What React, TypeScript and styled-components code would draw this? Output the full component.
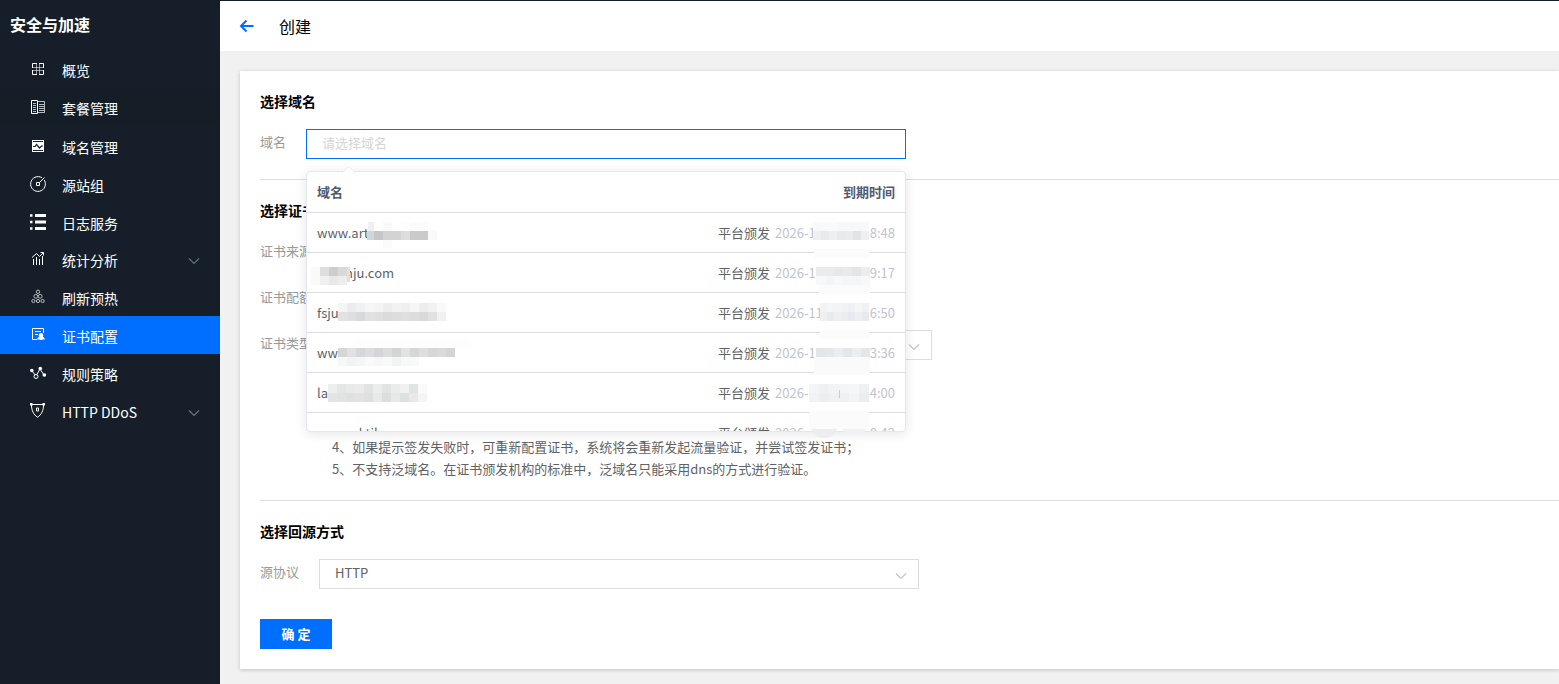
import React from 'react';
import styled, { createGlobalStyle, css } from 'styled-components';

const GlobalStyle = createGlobalStyle`
  *, *::before, *::after { box-sizing: border-box; }
  body {
    margin: 0;
    background: #f1f1f1;
    color: #606266;
    font-family: "Noto Sans CJK SC", "Liberation Sans", sans-serif;
    font-size: 13px;
    line-height: 22px;
  }
`;

const Page = styled.div`
  display: flex;
  min-height: 100vh;
`;

const Sidebar = styled.aside`
  flex: 0 0 220px;
  background: #161f29;
  color: #fff;
`;

const Brand = styled.h1`
  margin: 0;
  padding: 0 10px;
  height: 50px;
  font-size: 16px;
  font-weight: 700;
  line-height: 48px;
`;

const Nav = styled.nav`
  display: flex;
  flex-direction: column;
`;

const NavLink = styled.a<{ $state?: 'active' | 'hover'; $low?: boolean }>`
  display: flex;
  align-items: center;
  height: 38px;
  padding: ${p => (p.$low ? '2px 20px 0 30px' : '0 20px 0 30px')};
  color: #fff;
  font-size: 14px;
  font-weight: 400;
  text-decoration: none;
  ${p => p.$state === 'active' && css`background: #006eff;`}
  ${p => p.$state === 'hover' && css`background: #151e27;`}
`;

const NavIcon = styled.svg`
  width: 16px;
  height: 16px;
  flex: none;
  fill: none;
  stroke: currentColor;
`;

const NavText = styled.span`
  flex: 1;
  padding: 2px 0 0 16px;
`;

const NavArrow = styled.span`
  display: flex;
  padding-top: 4px;
`;

const Main = styled.main`
  flex: 1;
  min-width: 0;
  padding-bottom: 15px;
`;

const TopBar = styled.header`
  display: flex;
  align-items: center;
  height: 51px;
  padding: 0 18px;
  border-top: 1px solid #161f29;
  background: #fff;
  color: #000;
`;

const BackButton = styled.button`
  display: flex;
  padding: 0;
  border: 0;
  background: none;
  color: #006eff;
  cursor: pointer;
`;

const PageTitle = styled.h2`
  margin: 0 0 0 25px;
  font-size: 16px;
  font-weight: 400;
`;

const Card = styled.form`
  margin: 20px 0 0 20px;
  padding: 0 0 20px 20px;
  background: #fff;
  box-shadow: 0 1px 4px rgba(0, 0, 0, 0.2);
`;

const Section = styled.section<{ $last?: boolean }>`
  display: flex;
  flex-direction: column;
  gap: 16px;
  padding: 20px 0;
  ${p => p.$last ? css`padding-bottom: 30px;` : css`border-bottom: 1px solid #ddd;`}
`;

const SectionTitle = styled.h3`
  margin: 0;
  height: 22px;
  color: #000;
  font-size: 14px;
  font-weight: 700;
  line-height: 20px;
`;

const Field = styled.div`
  display: flex;
  gap: 20px;
  height: 30px;
`;

const Label = styled.label`
  flex: none;
  color: #999;
  line-height: 26px;
`;

const Control = styled.div`
  position: relative;
  width: 600px;
`;

const control = css`
  display: block;
  width: 100%;
  height: 30px;
  padding: 0 15px 3px;
  border: 1px solid #ddd;
  border-radius: 0;
  outline: 0;
  background: #fff;
  color: #606266;
  font-family: inherit;
  font-size: 13px;
`;

const TextInput = styled.input`
  ${control}
  border-color: #006eff;
  &::placeholder { color: #d5d5d5; opacity: 1; }
`;

const SelectBox = styled.select`
  ${control}
  appearance: none;
`;

const SelectArrow = styled.span`
  position: absolute;
  right: 12px;
  bottom: 7px;
  display: flex;
  pointer-events: none;
`;

const Popup = styled.div`
  position: absolute;
  z-index: 2;
  top: 42px;
  left: 0;
  width: 100%;
  border: 1px solid #e4e7ed;
  border-radius: 4px;
  background: #fff;
  box-shadow: 0 2px 12px rgba(0, 0, 0, 0.1);
`;

const PopupArrow = styled.svg`
  position: absolute;
  top: -6px;
  left: 35px;
`;

const PopupSmudge = styled.svg`
  position: absolute;
  right: 36px;
  bottom: -8px;
`;

const PopupScroll = styled.div`
  height: 259px;
  overflow: hidden;
`;

const DomainTable = styled.table`
  width: 100%;
  border-collapse: separate;
  border-spacing: 0;
`;

const HeadCell = styled.th<{ $end?: boolean }>`
  height: 41px;
  padding: 0 10px;
  border-bottom: 1px solid #ddd;
  color: #515a6e;
  font-weight: 700;
  text-align: ${p => (p.$end ? 'right' : 'left')};
`;

const Cell = styled.td<{ $end?: boolean }>`
  height: 40px;
  padding: 0 10px;
  border-bottom: 1px solid #ddd;
  text-align: ${p => (p.$end ? 'right' : 'left')};
`;

const Masked = styled.span<{ $shift?: boolean }>`
  position: relative;
  display: inline-block;
  ${p => p.$shift && css`padding-left: 28px;`}
`;

const Expiry = styled.span`
  position: relative;
  display: inline-flex;
  justify-content: space-between;
  width: 120px;
  margin-left: 5px;
  color: #c0c4cc;
`;

const MosaicSvg = styled.svg`
  position: absolute;
  top: 0;
  left: 0;
  width: 100%;
  height: 22px;
  overflow: visible;
`;

const Hints = styled.ol`
  margin: 0;
  padding: 60px 0 0 72px;
  list-style: none;
`;

const Submit = styled.button`
  display: block;
  width: 72px;
  height: 30px;
  padding: 0 0 2px;
  border: 0;
  background: #006eff;
  color: #fff;
  font-family: inherit;
  font-size: 13px;
  font-weight: 700;
  cursor: pointer;
`;

type Strip = { x: number; y: number; h: number; w?: number; tones: string[] };

function Mosaic({ strips }: { strips: Strip[] }) {
  return (
    <MosaicSvg aria-hidden="true" shapeRendering="crispEdges">
      {strips.map((s, i) =>
        s.tones.map((tone, j) => (
          <rect key={`${i}-${j}`} x={s.x + j * (s.w ?? 9)} y={s.y} width={s.w ?? 9} height={s.h} fill={tone} />
        )),
      )}
    </MosaicSvg>
  );
}

const Chevron = ({ color = '#c0c4cc' }: { color?: string }) => (
  <svg width="12" height="12" viewBox="0 0 12 12" fill="none" stroke={color} strokeWidth="1.2" aria-hidden="true">
    <path d="M1 3.500 6 8.500l5-5" />
  </svg>
);

const icons: Record<string, React.ReactNode> = {
  grid: (
    <>
      <path d="M6.500 3v10M9.500 3v10M3 6.500h10M3 9.500h10" opacity=".55" />
      <path d="M7 2.500H2.500V7M9 2.500h4.500V7M2.500 9v4.500H7M13.500 9v4.500H9" />
    </>
  ),
  book: (
    <>
      <path d="M1.500 1.500h6v13h-6z" />
      <path d="M3 4.500h3M3 6.500h3M3 8.500h3M3 10.500h3M3 12.500h3" opacity=".7" />
      <path d="M8 2.500h6.500v11H8M9 5.500h5M9 7.500h5M9 9.500h5M9 11.500h5" opacity=".7" />
    </>
  ),
  wave: (
    <>
      <path d="M2 2h12v12H2z" fill="currentColor" stroke="none" />
      <path d="M3 3.500h10M3 12.500h10" stroke="#161f29" />
      <path d="M3 8.500h2l1.500-2 3 3.500 2-2H13" stroke="#161f29" strokeWidth="1.2" />
    </>
  ),
  gauge: (
    <>
      <path d="M14.200 4A7.400 7.400 0 1 1 12 1.800M14.500 1.500l-5 5" />
      <path d="M6.500 6.500h3v3h-3z" />
    </>
  ),
  list: (
    <>
      <path d="M5 1.500h11M5 8h11M5 14.500h11" strokeWidth="3" />
      <path d="M0 1.500h2.500M0 8h2.500M0 14.500h2.500" strokeWidth="2.500" />
    </>
  ),
  chart: (
    <path d="M3.500 8v6M6.500 6v8M9.500 8v6M12.500 5v9M2 6.500l4.500-4 3 3 4-4M10.500 1.500h3v3" />
  ),
  cluster: (
    <g opacity=".7">
      <circle cx="8" cy="2.800" r="1.700" />
      <circle cx="5.800" cy="7.300" r="1.900" />
      <circle cx="10.200" cy="7.300" r="1.900" />
      <circle cx="3.400" cy="12" r="1.600" />
      <circle cx="8" cy="12" r="1.600" />
      <circle cx="12.600" cy="12" r="1.600" />
    </g>
  ),
  cert: (
    <>
      <path d="M7 12.500H2.500v-11h11V6M5 4.500h6M5 7.500h3" />
      <path d="M11 6a2.300 2.300 0 0 1 1.800 3.700L14.500 11v2l-1.500-.8-1 .8h-2l-1-.8-1.500.8v-2l1.700-1.300A2.300 2.300 0 0 1 11 6z" fill="currentColor" stroke="none" />
    </>
  ),
  nodes: (
    <>
      <path d="M2 6l4 5 4-7 4 6" />
      <circle cx="6" cy="11.500" r="2" fill="#161f29" />
      <g fill="currentColor" stroke="none">
        <circle cx="1.800" cy="5.500" r="1.800" />
        <circle cx="10.300" cy="3.500" r="1.800" />
        <circle cx="14.300" cy="10" r="1.800" />
      </g>
    </>
  ),
  shield: (
    <>
      <path d="M2 1.500h11M1.500 2c0 5.500 2 9.500 6 12.300 4-2.800 6-6.800 6-12.300" />
      <path d="M6.500 5h2v3h-2z" />
      <path d="M0 0h2.500v2.500H0zM12.500 0H15v2.500h-2.500z" fill="currentColor" stroke="none" />
    </>
  ),
};

const navItems: { label: string; icon: string; state?: 'active' | 'hover'; low?: boolean; arrow?: string }[] = [
  { label: '概览', icon: 'grid' },
  { label: '套餐管理', icon: 'book', state: 'hover' },
  { label: '域名管理', icon: 'wave', low: true },
  { label: '源站组', icon: 'gauge', low: true },
  { label: '日志服务', icon: 'list', low: true },
  { label: '统计分析', icon: 'chart', arrow: '#60707c' },
  { label: '刷新预热', icon: 'cluster' },
  { label: '证书配置', icon: 'cert', state: 'active' },
  { label: '规则策略', icon: 'nodes' },
  { label: 'HTTP DDoS', icon: 'shield', arrow: '#6f7479' },
];

type Row = { domain: string; shift?: boolean; mask: Strip[]; start: string; end: string; dateMask: Strip[] };

const rows: Row[] = [
  {
    domain: 'www.art', start: '2026-1', end: '8:48',
    mask: [
      { x: 51, y: 0, h: 9, w: 6, tones: ['#f0f0f1'] },
      { x: 50, y: 9, h: 9, w: 7, tones: ['#d5d5d7'] },
      { x: 57, y: 0, h: 9, tones: ['#fff', '#f9f9f9', '#fff', '#fdfdfd', '#fbfbfb', '#fbfbfb', '#fff'] },
      { x: 57, y: 9, h: 9, tones: ['#c5c6c9', '#d3d3d4', '#d3d3d4', '#dcdddc', '#c9cacc', '#c9cacc', '#f9f9f9'] },
      { x: 66, y: 18, h: 8, tones: ['#fbfbfb'] },
    ],
    dateMask: [
      { x: 38, y: 0, h: 9, w: 8, tones: ['#f8f9fa', '#fafafb', '#f9fafb', '#f8f8f9', '#f7f8f9', '#f8f8f8', '#f7f8f8'] },
      { x: 38, y: 9, h: 9, w: 8, tones: ['#efeff2', '#e9eaed', '#eeeff2', '#e8e9ec', '#eaebed', '#e2e4e7', '#eeeff1'] },
      { x: 39, y: 27, h: 9, w: 56, tones: ['#fbfbfb'] },
    ],
  },
  {
    domain: 'nju.com', shift: true, start: '2026-1', end: '9:17',
    mask: [
      { x: -6, y: 5, h: 9, tones: ['#fafafa', '#dedede', '#cccdce', '#d9d9da'] },
      { x: -6, y: 14, h: 9, tones: ['#fafafa', '#f0f0f0', '#e9e9e9', '#ededed'] },
      { x: 30, y: 5, h: 15, w: 3, tones: ['#e0e0e0'] },
    ],
    dateMask: [
      { x: 41, y: 5, h: 9, w: 9, tones: ['#e9ebee', '#eaebef', '#e6e8ec', '#e9eaed', '#e3e5e8', '#ededf1'] },
      { x: 41, y: 14, h: 9, w: 9, tones: ['#f7f8f9', '#f4f5f7', '#f7f8f9', '#f5f6f7', '#f4f6f7', '#f7f8f9'] },
      { x: 44, y: 23, h: 9, w: 51, tones: ['#fbfbfb'] },
    ],
  },
  {
    domain: 'fsju', start: '2026-11', end: '6:50',
    mask: [
      { x: 21, y: 1, h: 9, tones: ['#f5f5f6', '#ebeced', '#f0f1f1', '#f6f6f6', '#f3f3f3', '#ededee', '#f2f2f2', '#eeefef', '#f6f6f6', '#ededee', '#f2f2f2', '#f9f9f9'] },
      { x: 21, y: 10, h: 9, tones: ['#e1e2e3', '#dedfe0', '#d8d9da', '#e0e1e2', '#dedfe0', '#dadbdc', '#dcdddd', '#dfdfdf', '#dcdcdc', '#d9d9d9', '#e1e1e1', '#f1f1f1'] },
    ],
    dateMask: [
      { x: 45, y: 1, h: 9, w: 7, tones: ['#f0f2f3', '#f5f6f7', '#f3f4f6', '#f1f2f5', '#eff0f3', '#f5f5f7', '#f0f1f3'] },
      { x: 45, y: 10, h: 9, w: 7, tones: ['#edeff1', '#e9eaed', '#eeeff2', '#ebecef', '#e8e9ee', '#edeef1', '#e9eaed'] },
      { x: 45, y: 28, h: 9, w: 49, tones: ['#fbfbfb'] },
    ],
  },
  {
    domain: 'ww', start: '2026-10', end: '3:36',
    mask: [
      { x: 36, y: -3, h: 9, w: 118, tones: ['#fdfdfd'] },
      { x: 21, y: 6, h: 9, tones: ['#d5d6d8', '#e0e1e2', '#d6d7d8', '#dcddde', '#d5d5d7', '#dbdcdc', '#d4d4d6', '#e2e2e2', '#d5d6d7', '#dddede', '#d7d7d9', '#dadada', '#d3d4d6'] },
      { x: 21, y: 15, h: 9, tones: ['#f7f9f9', '#f1f3f3', '#f4f5f5', '#f9f9f9', '#f6f6f6', '#f9f9f9', '#f1f4f3', '#f7f8f8', '#f8f9f9'] },
    ],
    dateMask: [
      { x: 41, y: 6, h: 9, w: 9, tones: ['#e3e5e9', '#e5e7ed', '#ecedf1', '#e4e6ec', '#ecedf0', '#e5e6ea'] },
      { x: 39, y: 15, h: 18, w: 56, tones: ['#fafafa'] },
    ],
  },
  {
    domain: 'la', start: '2026-', end: '4:00',
    mask: [
      { x: 11, y: 2, h: 9, tones: ['#eeeeee', '#e4e6e5', '#e8e9e8', '#ebebec', '#e1e3e2', '#ebecec', '#e2e4e3', '#eaebea', '#f1f1f1', '#e2e4e3', '#fafafa'] },
      { x: 11, y: 11, h: 9, tones: ['#e3e5e4', '#e1e2e2', '#dfe0df', '#e1e2e2', '#dee0df', '#e8e9e9', '#dcdddd', '#e7e9e8', '#dee0df', '#e8e8e8', '#f5f5f5'] },
    ],
    dateMask: [
      { x: 34, y: 2, h: 9, w: 10, tones: ['#f3f4f5', '#eff0f2', '#f2f3f4', '#f4f5f7', '#f5f6f7', '#eef0f2'] },
      { x: 34, y: 11, h: 9, w: 10, tones: ['#f1f2f4', '#edeef0', '#f0f1f3', '#eff0f3', '#f3f4f5', '#ecedf0'] },
      { x: 64, y: 8, h: 8, w: 1, tones: ['#c9ccd3'] },
      { x: 34, y: 29, h: 18, w: 60, tones: ['#fbfbfb'] },
    ],
  },
  { domain: 'www.aktiles.com', start: '2026-', end: '8:42', mask: [], dateMask: [] },
];

export default function App() {
  return (
    <>
      <GlobalStyle />
      <Page>
        <Sidebar>
          <Brand>安全与加速</Brand>
          <Nav>
            {navItems.map(item => (
              <NavLink key={item.label} href="#" $state={item.state} $low={item.low}>
                <NavIcon viewBox="0 0 16 16" aria-hidden="true">{icons[item.icon]}</NavIcon>
                <NavText>{item.label}</NavText>
                {item.arrow && <NavArrow><Chevron color={item.arrow} /></NavArrow>}
              </NavLink>
            ))}
          </Nav>
        </Sidebar>
        <Main>
          <TopBar>
            <BackButton type="button" aria-label="返回">
              <svg width="16" height="16" viewBox="0 0 16 16" fill="none" stroke="currentColor" strokeWidth="2">
                <path d="M15.500 8H3M8.500 2.500 3 8l5.500 5.500" />
              </svg>
            </BackButton>
            <PageTitle>创建</PageTitle>
          </TopBar>
          <Card>
            <Section>
              <SectionTitle>选择域名</SectionTitle>
              <Field>
                <Label htmlFor="domain">域名</Label>
                <Control>
                  <TextInput id="domain" placeholder="请选择域名" />
                  <Popup>
                    <PopupArrow width="14" height="7" viewBox="0 0 14 7" aria-hidden="true">
                      <path d="M0 7 6 1h1l6 6" fill="#fff" stroke="#ebeef5" />
                    </PopupArrow>
                    <PopupScroll>
                      <DomainTable>
                        <thead>
                          <tr>
                            <HeadCell scope="col">域名</HeadCell>
                            <HeadCell scope="col" $end>到期时间</HeadCell>
                          </tr>
                        </thead>
                        <tbody>
                          {rows.map(row => (
                            <tr key={row.domain}>
                              <Cell>
                                <Masked $shift={row.shift}>
                                  {row.domain}
                                  <Mosaic strips={row.mask} />
                                </Masked>
                              </Cell>
                              <Cell $end>
                                平台颁发
                                <Expiry>
                                  <span>{row.start}</span>
                                  <span>{row.end}</span>
                                  <Mosaic strips={row.dateMask} />
                                </Expiry>
                              </Cell>
                            </tr>
                          ))}
                        </tbody>
                      </DomainTable>
                    </PopupScroll>
                    <PopupSmudge width="60" height="10" viewBox="0 0 60 10" aria-hidden="true">
                      <path d="M2 0h26c-2 5-6 9-13 9S4 5 2 0z" fill="#ededf0" />
                      <path d="M33 0h24c-3 4-6 6-12 6s-9-2-12-6z" fill="#f0f1f3" />
                    </PopupSmudge>
                  </Popup>
                </Control>
              </Field>
            </Section>
            <Section>
              <SectionTitle>选择证书</SectionTitle>
              <Field><Label as="span">证书来源</Label></Field>
              <Field><Label as="span">证书配额</Label></Field>
              <Field>
                <Label htmlFor="cert-type">证书类型</Label>
                <Control>
                  <SelectBox id="cert-type" />
                  <SelectArrow><Chevron /></SelectArrow>
                </Control>
              </Field>
              <Hints start={4}>
                <li>4、如果提示签发失败时，可重新配置证书，系统将会重新发起流量验证，并尝试签发证书；</li>
                <li>5、不支持泛域名。在证书颁发机构的标准中，泛域名只能采用dns的方式进行验证。</li>
              </Hints>
            </Section>
            <Section $last>
              <SectionTitle>选择回源方式</SectionTitle>
              <Field>
                <Label htmlFor="protocol">源协议</Label>
                <Control>
                  <SelectBox id="protocol" defaultValue="HTTP">
                    <option>HTTP</option>
                  </SelectBox>
                  <SelectArrow><Chevron /></SelectArrow>
                </Control>
              </Field>
            </Section>
            <Submit type="button">确 定</Submit>
          </Card>
        </Main>
      </Page>
    </>
  );
}
